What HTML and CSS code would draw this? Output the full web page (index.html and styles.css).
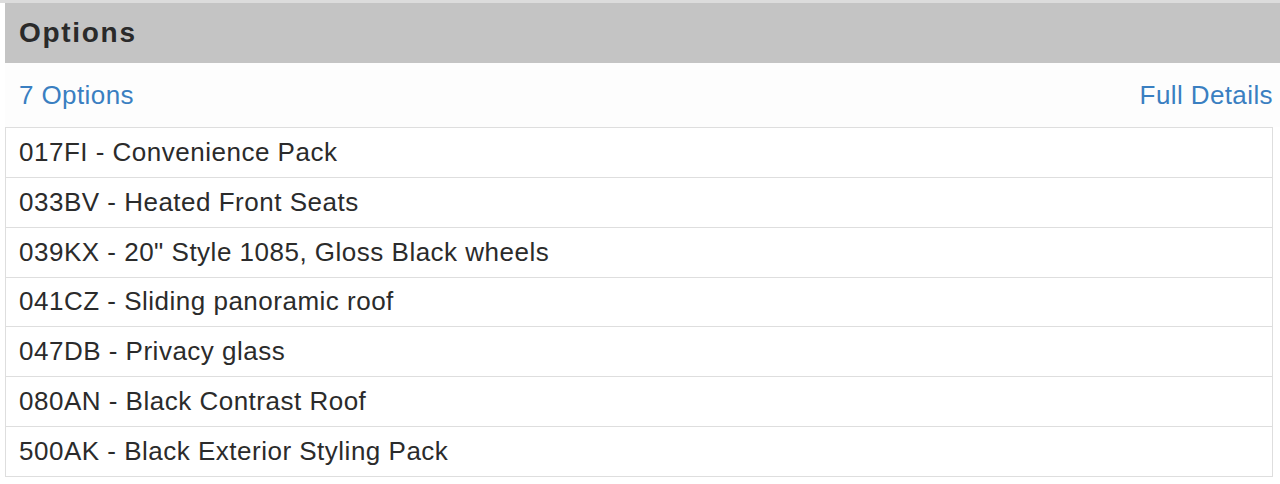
FILE: index.html
```html
<!DOCTYPE html>
<html>
<head>
<meta charset="utf-8">
<link rel="stylesheet" href="styles.css">
</head>
<body>
<div class="panel">
  <div class="panel-head">Options</div>
  <div class="panel-sub">
    <a class="link" href="#">7 Options</a>
    <a class="link" href="#">Full Details</a>
  </div>
  <ul class="opt-list">
    <li class="opt">017FI - Convenience Pack</li>
    <li class="opt">033BV - Heated Front Seats</li>
    <li class="opt">039KX - 20" Style 1085, Gloss Black wheels</li>
    <li class="opt">041CZ - Sliding panoramic roof</li>
    <li class="opt">047DB - Privacy glass</li>
    <li class="opt">080AN - Black Contrast Roof</li>
    <li class="opt">500AK - Black Exterior Styling Pack</li>
  </ul>
</div>
</body>
</html>
```

FILE: styles.css
```css
html, body {
  margin: 0;
  padding: 0;
  background: #ffffff;
}
body {
  font-family: "Liberation Sans", Arial, sans-serif;
  border-top: 3px solid #dcdcdc;
}
.panel {
  padding-left: 5px;
}
.panel-head {
  background: #c4c4c4;
  height: 60px;
  display: flex;
  align-items: center;
  padding-left: 14px;
  font-size: 28px;
  font-weight: bold;
  letter-spacing: 1.7px;
  color: #2a2a2a;
}
.panel-sub {
  height: 64px;
  display: flex;
  justify-content: space-between;
  align-items: center;
  padding-left: 14px;
  padding-right: 7px;
  background: #fdfdfd;
}
.link {
  color: #3a7fc1;
  text-decoration: none;
  font-size: 26px;
  letter-spacing: 0.4px;
}
.opt-list {
  list-style: none;
  margin: 0;
  width: 1266px;
  padding: 0;
  border: 1px solid #dedede;
}
.opt {
  height: 48.85px;
  display: flex;
  align-items: center;
  padding-left: 13px;
  font-size: 26px;
  letter-spacing: 0.5px;
  color: #2b2b2b;
  border-top: 1px solid #dedede;
}
.opt:first-child {
  border-top: none;
}
```
